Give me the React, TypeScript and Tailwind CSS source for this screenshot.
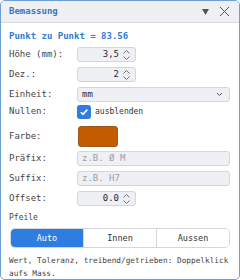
import React, { useState } from 'react';

const mono = { fontFamily: '"DejaVu Sans Mono", "Liberation Mono", monospace' };

const Spinner = () => (
  <svg width="9" height="12" viewBox="0 0 9 12" className="text-gray-500">
    <path d="M1.5 4.5 L4.5 1.5 L7.5 4.5" fill="none" stroke="currentColor" strokeWidth="1" />
    <path d="M1.5 7.5 L4.5 10.5 L7.5 7.5" fill="none" stroke="currentColor" strokeWidth="1" />
  </svg>
);

const NumberBox: React.FC<{ value: string }> = ({ value }) => (
  <div className="w-[59px] h-[15px] flex items-center justify-end gap-[3px] pr-[4px] rounded-[3px] border border-[#d3d6db] bg-[#eff0f3] text-[9px] text-gray-800">
    <span>{value}</span>
    <Spinner />
  </div>
);

const Row: React.FC<{ label: string; className?: string; children: React.ReactNode }> = ({ label, className = '', children }) => (
  <div className={`flex items-center ${className}`}>
    <span className="w-[68px] shrink-0 text-[9px] text-[#444]">{label}</span>
    {children}
  </div>
);

export default function App() {
  const [mode, setMode] = useState('Auto');

  return (
    <div style={mono} className="w-[240px] h-[280px] flex flex-col border border-[#6e9fd4] rounded-[5px] overflow-hidden bg-white">
      <header className="h-[22px] shrink-0 flex items-center justify-between pl-[8px] pr-[9px] bg-[#eef0f3] border-b border-[#d6dae0]">
        <h1 className="text-[9px] font-bold text-[#3577c4]">Bemassung</h1>
        <div className="flex items-center gap-[10px] text-[#555]">
          <svg width="7" height="6" viewBox="0 0 7 6"><path d="M0 0 H7 L3.5 6 Z" fill="currentColor" /></svg>
          <svg width="11" height="11" viewBox="0 0 11 11"><path d="M1 1 L10 10 M10 1 L1 10" stroke="currentColor" strokeWidth="1" /></svg>
        </div>
      </header>

      <div className="flex flex-col pl-[8px] pr-[9px]">
        <p className="mt-[7px] text-[9px] font-bold text-[#2f7bd3] leading-[12px]">Punkt zu Punkt = 83.56</p>

        <Row label="Höhe (mm):" className="mt-[5px]">
          <NumberBox value="3,5" />
        </Row>
        <Row label="Dez.:" className="mt-[5px]">
          <NumberBox value="2" />
        </Row>
        <Row label="Einheit:" className="mt-[5px]">
          <div className="flex-1 h-[15px] flex items-center justify-between pl-[4px] pr-[6px] rounded-[3px] border border-[#d3d6db] bg-[#eff0f3] text-[9px] text-gray-800">
            <span>mm</span>
            <svg width="7" height="5" viewBox="0 0 7 5"><path d="M1 1 L3.5 3.5 L6 1" fill="none" stroke="#555" strokeWidth="1" /></svg>
          </div>
        </Row>
        <Row label="Nullen:" className="mt-[3px]">
          <div className="w-[14px] h-[14px] flex items-center justify-center rounded-[3px] bg-[#2f7de1]">
            <svg width="10" height="10" viewBox="0 0 10 10"><path d="M1.8 5.2 L4 7.4 L8.3 2.6" fill="none" stroke="white" strokeWidth="1.6" /></svg>
          </div>
          <span className="ml-[4px] text-[8px] text-[#333]">ausblenden</span>
        </Row>
        <Row label="Farbe:" className="mt-[7px]">
          <div className="ml-[1px] w-[40px] h-[21px] rounded-[3px] border border-[#9a5a20] bg-[#c35c00]" />
        </Row>
        <Row label="Präfix:" className="mt-[4px]">
          <div className="flex-1 h-[15px] flex items-center pl-[4px] rounded-[3px] border border-[#d3d6db] bg-[#eff0f3] text-[9px] text-[#9a9ea5]">z.B. Ø M</div>
        </Row>
        <Row label="Suffix:" className="mt-[5px]">
          <div className="flex-1 h-[15px] flex items-center pl-[4px] rounded-[3px] border border-[#d3d6db] bg-[#eff0f3] text-[9px] text-[#9a9ea5]">z.B. H7</div>
        </Row>
        <Row label="Offset:" className="mt-[5px]">
          <NumberBox value="0.0" />
        </Row>

        <p className="mt-[6px] text-[8px] text-[#444] leading-[12px]">Pfeile</p>

        <div className="mt-[4px] ml-[1px] h-[20px] flex rounded-[5px] border border-[#d3d6db] overflow-hidden text-[8.5px]">
          {['Auto', 'Innen', 'Aussen'].map((m, i) => (
            <button
              key={m}
              onClick={() => setMode(m)}
              className={`flex-1 flex items-center justify-center ${i > 0 ? 'border-l border-[#d3d6db]' : ''} ${mode === m ? 'bg-[#2f7de1] text-white' : 'bg-white text-[#333]'}`}
            >
              {m}
            </button>
          ))}
        </div>

        <p className="mt-[6px] text-[7.75px] leading-[13px] text-[#444]">Wert, Toleranz, treibend/getrieben: Doppelklick aufs Mass.</p>
      </div>
    </div>
  );
}
